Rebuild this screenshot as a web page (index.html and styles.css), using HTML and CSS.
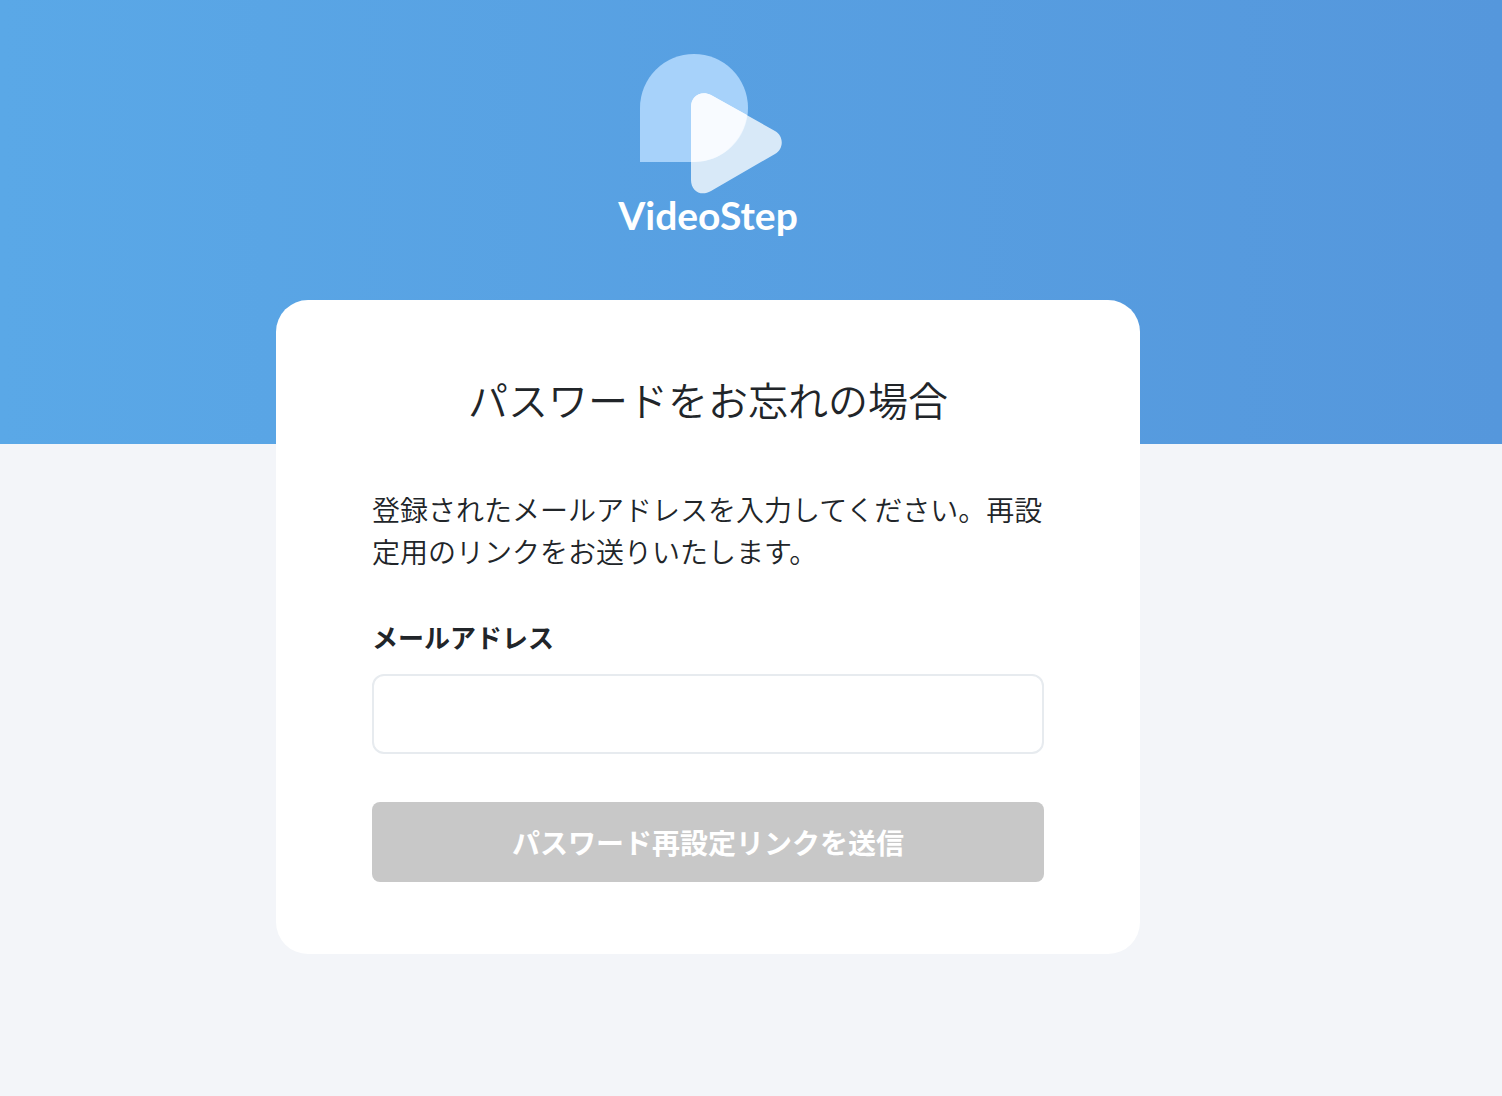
FILE: index.html
```html
<!DOCTYPE html>
<html lang="ja">
<head>
<meta charset="UTF-8">
<meta name="viewport" content="width=device-width, initial-scale=1.0">
<title>パスワードをお忘れの場合 | VideoStep</title>
<link rel="stylesheet" href="styles.css">
</head>
<body>
<div class="page">
  <header class="brand">
    <svg class="brand-mark" viewBox="-6 -1 150 142" aria-hidden="true">
      <path fill="#a7d2fa" d="M1 109V55A54 54 0 1 1 55 109Z"/>
      <path fill="#fff" fill-opacity=".77" d="M52 54C52 43 62 37 72 42L136 78C145 83 145 96 136 101L72 138C62 144 52 138 52 127Z"/>
      <path fill="#f8fbff" d="M52 109V54C52 43 62 37 72 42L108 62A54 54 0 0 1 55 109Z"/>
    </svg>
    <span class="brand-name">VideoStep</span>
  </header>
  <main class="card">
    <h1>パスワードをお忘れの場合</h1>
    <p class="lead">登録されたメールアドレスを入力してください。再設定用のリンクをお送りいたします。</p>
    <form>
      <label for="email">メールアドレス</label>
      <input type="email" id="email" name="email" autocomplete="email">
      <button type="submit" disabled>パスワード再設定リンクを送信</button>
    </form>
  </main>
</div>
</body>
</html>
```
FILE: styles.css
```css
* {box-sizing:border-box;}
body {
  margin:0;
  font-family:"Noto Sans CJK JP",sans-serif;
  font-size:28px;
  font-weight:350;
  line-height:42px;
  color:#212529;
  background:#f3f5f9;
}

.page {
  min-height:100vh;
  display:flex;
  flex-direction:column;
  align-items:center;
  padding:52px 86px 48px 0;
  background:linear-gradient(90deg,#5aa8e7,#5597dc) top / 100% 444px no-repeat;
}

.brand {display:flex;flex-direction:column;align-items:center;margin-bottom:64px;}
.brand-mark {width:150px;height:142px;}
.brand-name {font-family:Lato,sans-serif;font-size:39px;font-weight:700;line-height:42px;color:#fff;}

.card {
  width:100%;
  max-width:864px;
  padding:72px 96px;
  background:#fff;
  border-radius:32px;
}
.card h1 {margin:0 0 62px;font-size:40px;font-weight:350;line-height:54px;text-align:center;}
.lead {margin:0 0 44px;}

form {display:flex;flex-direction:column;}
label {margin-bottom:16px;font-size:26px;font-weight:700;line-height:42px;}
input {
  width:100%;
  height:80px;
  margin-bottom:48px;
  padding:0 24px;
  font:inherit;
  color:inherit;
  border:2px solid #e7ebef;
  border-radius:12px;
  background:#fff;
}
button {
  height:80px;
  border:none;
  border-radius:8px;
  font:inherit;
  font-weight:700;
  color:#fff;
  background:#1c84dd;
  cursor:pointer;
}
button:disabled {background:#c8c8c8;cursor:default;}
```
